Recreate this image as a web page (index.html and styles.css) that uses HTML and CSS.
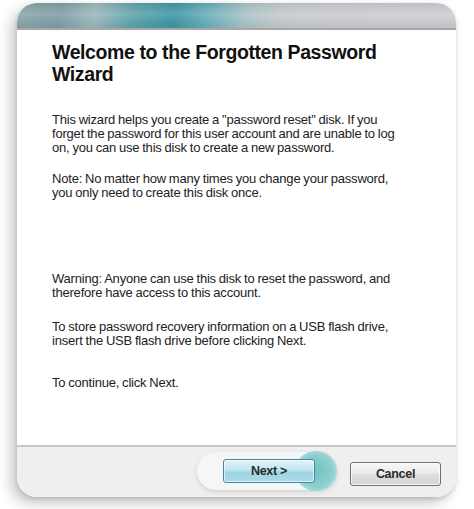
FILE: index.html
```html
<!DOCTYPE html>
<html>
<head>
<meta charset="utf-8">
<link rel="stylesheet" href="styles.css">
</head>
<body>
<div class="stage">
  <div class="window">
    <div class="titlebar"></div>
    <div class="content">
      <h1 class="title">Welcome to the Forgotten Password<br>Wizard</h1>
      <p class="para first">This wizard helps you create a "password reset" disk. If you<br>forget the password for this user account and are unable to log<br>on, you can use this disk to create a new password.</p>
      <p class="para note">Note: No matter how many times you change your password,<br>you only need to create this disk once.</p>
      <p class="para warn">Warning: Anyone can use this disk to reset the password, and<br>therefore have access to this account.</p>
      <p class="para store">To store password recovery information on a USB flash drive,<br>insert the USB flash drive before clicking Next.</p>
      <p class="para cont">To continue, click Next.</p>
    </div>
    <div class="footer">
      <div class="next-wrap">
        <button class="btn next">Next &gt;</button>
      </div>
      <button class="btn cancel">Cancel</button>
    </div>
  </div>
</div>
</body>
</html>
```

FILE: styles.css
```css
html, body {
  margin: 0;
  padding: 0;
  background: #ffffff;
}

.stage {
  width: 474px;
  height: 509px;
  padding: 3px 18px 0 17px;
  box-sizing: border-box;
}

.window {
  width: 439px;
  height: 494px;
  border-radius: 20px;
  overflow: hidden;
  background: #ffffff;
  display: flex;
  flex-direction: column;
  box-shadow: -6px 6px 14px rgba(0, 0, 0, 0.22), 0 2px 4px rgba(0, 0, 0, 0.12);
  font-family: "Liberation Sans", Arial, sans-serif;
  color: #1e1e1e;
}

.titlebar {
  height: 25px;
  flex: none;
  border-bottom: 2px solid #a6a6a8;
  background:
    linear-gradient(180deg, rgba(0,0,0,0.06) 0%, rgba(255,255,255,0.12) 45%, rgba(255,255,255,0) 70%, rgba(0,0,0,0.06) 100%),
    linear-gradient(100deg, #8da7ab 0%, #7e9fa5 10%, #9db8bc 18%, #5ea3ad 27%, #3f97a4 36%, #6fb0ba 44%, #a9c3c7 52%, #c4cacc 60%, #cbcbcf 75%, #cdcdd1 100%);
}

.content {
  flex: 1;
  padding: 11px 10px 0 35px;
}

.title {
  margin: 0;
  font-size: 19.5px;
  line-height: 22px;
  font-weight: bold;
  color: #111;
  letter-spacing: -0.4px;
  white-space: nowrap;
}

.para {
  margin: 0;
  font-size: 13px;
  line-height: 14px;
  letter-spacing: -0.2px;
  word-spacing: -0.5px;
  color: #222;
  white-space: nowrap;
}

.para.first {
  margin-top: 28px;
}

.para.note {
  margin-top: 17px;
}

.para.warn {
  margin-top: 72px;
}

.para.store {
  margin-top: 20px;
}

.para.cont {
  margin-top: 28px;
}

.footer {
  height: 52px;
  flex: none;
  border-top: 2px solid #c9c9c9;
  background: #efefef;
  display: flex;
  align-items: center;
  justify-content: flex-end;
  gap: 35px;
  padding-right: 15px;
  box-sizing: border-box;
}

.btn {
  font-family: "Liberation Sans", Arial, sans-serif;
  font-size: 12.5px;
  font-weight: bold;
  color: #2a2a2a;
  height: 24px;
  border-radius: 3px;
  padding: 0;
  letter-spacing: -0.3px;
}

.next-wrap {
  position: relative;
  margin-bottom: 3px;
}

.next-wrap::before {
  content: "";
  position: absolute;
  left: -26px;
  top: -7px;
  width: 140px;
  height: 38px;
  border-radius: 19px;
  background: #f6f6f6;
  box-shadow: 0 2px 5px rgba(0,0,0,0.12);
}

.next-wrap::after {
  content: "";
  position: absolute;
  left: 72px;
  top: -8px;
  width: 42px;
  height: 40px;
  border-radius: 50%;
  background: radial-gradient(circle at 50% 50%, #72c2c2 0%, #8ccfce 55%, rgba(140,207,206,0.6) 80%, rgba(140,207,206,0) 100%);
}

.next {
  position: relative;
  z-index: 1;
  width: 92px;
  border: 1px solid #3f8aa9;
  background: linear-gradient(180deg, #e2f4f9 0%, #bfe5f0 45%, #9fd5e4 55%, #a8dbe8 100%);
  box-shadow: inset 0 0 0 1px rgba(255,255,255,0.6);
}

.cancel {
  width: 91px;
  margin-top: 3px;
  border: 1px solid #707070;
  background: linear-gradient(180deg, #f7f7f7 0%, #ececec 45%, #dcdcdc 55%, #d6d6d6 100%);
  box-shadow: inset 0 0 0 1px rgba(255,255,255,0.7);
}
```
